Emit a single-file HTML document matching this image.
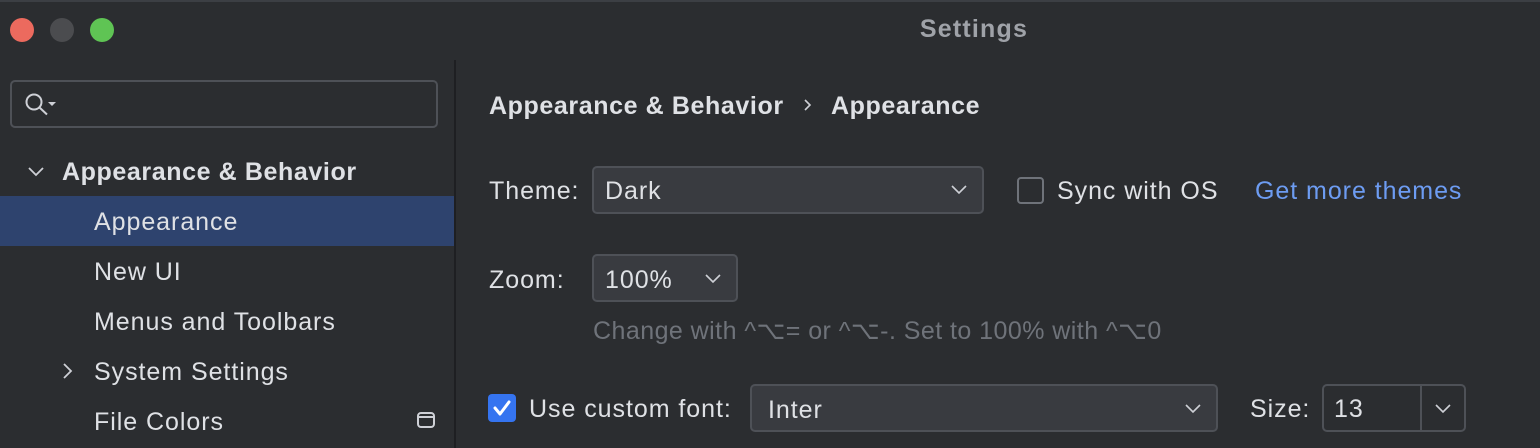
<!DOCTYPE html>
<html><head><meta charset="utf-8"><style>
*{margin:0;padding:0;box-sizing:border-box}
body{width:1540px;height:448px;background:#2b2d30;font-family:"Liberation Sans",sans-serif;color:#dfe1e5;overflow:hidden;position:relative}
.a{position:absolute;white-space:nowrap}
.t{font-size:25px;letter-spacing:0.95px;line-height:30px}
.b{font-weight:bold;letter-spacing:0.6px}
.box{position:absolute;background:#393b40;border:2px solid #4e5157;border-radius:5px}
</style></head><body>
<div class="a" style="left:0;top:0;width:1540px;height:2px;background:#3c3f44"></div>
<div class="a" style="left:10px;top:18px;width:24px;height:24px;border-radius:50%;background:#ec6a5e"></div>
<div class="a" style="left:50px;top:18px;width:24px;height:24px;border-radius:50%;background:#4b4c4f"></div>
<div class="a" style="left:90px;top:18px;width:24px;height:24px;border-radius:50%;background:#5fc454"></div>
<div class="a b" style="left:0;width:1948px;top:14px;text-align:center;font-size:25px;letter-spacing:1.2px;color:#9fa2a8;line-height:30px">Settings</div>

<div class="a" style="left:454px;top:60px;width:2px;height:388px;background:#1e1f22"></div>

<div class="a" style="left:10px;top:80px;width:428px;height:48px;border:2px solid #4e5157;border-radius:5px"></div>
<svg class="a" style="left:22px;top:90px" width="36" height="28" viewBox="0 0 36 28"><circle cx="12" cy="12" r="7.5" fill="none" stroke="#ced0d6" stroke-width="2"/><path d="M17.5 17.5 L25 24.5" stroke="#ced0d6" stroke-width="2"/><path d="M26 12 L34 12 L30 16Z" fill="#ced0d6"/></svg>

<svg class="a" style="left:26px;top:162px" width="20" height="18"><path d="M3 6 L10 13 L17 6" fill="none" stroke="#ced0d6" stroke-width="1.8"/></svg>
<div class="a t b" style="left:62px;top:157px">Appearance &amp; Behavior</div>
<div class="a" style="left:0;top:196px;width:454px;height:50px;background:#2e436e"></div>
<div class="a t" style="left:94px;top:207px">Appearance</div>
<div class="a t" style="left:94px;top:257px">New UI</div>
<div class="a t" style="left:94px;top:307px">Menus and Toolbars</div>
<svg class="a" style="left:58px;top:361px" width="18" height="20"><path d="M6 3 L13 10 L6 17" fill="none" stroke="#ced0d6" stroke-width="1.8"/></svg>
<div class="a t" style="left:94px;top:357px">System Settings</div>
<div class="a t" style="left:94px;top:407px">File Colors</div>
<div class="a" style="left:417px;top:412px;width:18px;height:16px;border:2px solid #ced0d6;border-radius:4px"></div>
<div class="a" style="left:417px;top:416px;width:18px;height:2px;background:#ced0d6"></div>

<div class="a t b" style="left:489px;top:91px">Appearance &amp; Behavior</div>
<svg class="a" style="left:802px;top:97px" width="12" height="16"><path d="M3 3 L8 8 L3 13" fill="none" stroke="#ced0d6" stroke-width="1.6"/></svg>
<div class="a t b" style="left:831px;top:91px">Appearance</div>

<div class="a t" style="left:489px;top:176px">Theme:</div>
<div class="box" style="left:592px;top:166px;width:392px;height:48px"></div>
<div class="a t" style="left:605px;top:176px">Dark</div>
<svg class="a" style="left:949px;top:183px" width="20" height="14"><path d="M3 3 L10 10 L17 3" fill="none" stroke="#ced0d6" stroke-width="1.6"/></svg>
<div class="a" style="left:1017px;top:177px;width:27px;height:27px;border:2px solid #6f737a;border-radius:4px"></div>
<div class="a t" style="left:1057px;top:176px">Sync with OS</div>
<div class="a t" style="left:1255px;top:176px;color:#6d9cf2">Get more themes</div>

<div class="a t" style="left:489px;top:265px">Zoom:</div>
<div class="box" style="left:592px;top:254px;width:146px;height:48px"></div>
<div class="a t" style="left:605px;top:265px">100%</div>
<svg class="a" style="left:703px;top:272px" width="20" height="14"><path d="M3 3 L10 10 L17 3" fill="none" stroke="#ced0d6" stroke-width="1.6"/></svg>
<div class="a t" style="left:593px;top:316px;color:#6f737a;letter-spacing:0.45px">Change with ^⌥= or ^⌥-. Set to 100% with ^⌥0</div>

<div class="a" style="left:488px;top:394px;width:28px;height:28px;background:#3574f0;border-radius:4px"></div>
<svg class="a" style="left:488px;top:394px" width="28" height="28"><path d="M7 14 L12 20 L21 8" fill="none" stroke="#fff" stroke-width="3" stroke-linecap="round" stroke-linejoin="round"/></svg>
<div class="a t" style="left:529px;top:394px">Use custom font:</div>
<div class="box" style="left:750px;top:384px;width:468px;height:48px"></div>
<div class="a t" style="left:768px;top:395px">Inter</div>
<svg class="a" style="left:1183px;top:402px" width="20" height="14"><path d="M3 3 L10 10 L17 3" fill="none" stroke="#ced0d6" stroke-width="1.6"/></svg>
<div class="a t" style="left:1250px;top:394px">Size:</div>
<div class="a" style="left:1322px;top:384px;width:144px;height:48px;border:2px solid #4e5157;border-radius:5px"></div>
<div class="a" style="left:1420px;top:386px;width:2px;height:44px;background:#4e5157"></div>
<div class="a t" style="left:1334px;top:394px">13</div>
<svg class="a" style="left:1433px;top:402px" width="20" height="14"><path d="M3 3 L10 10 L17 3" fill="none" stroke="#ced0d6" stroke-width="1.6"/></svg>
</body></html>
